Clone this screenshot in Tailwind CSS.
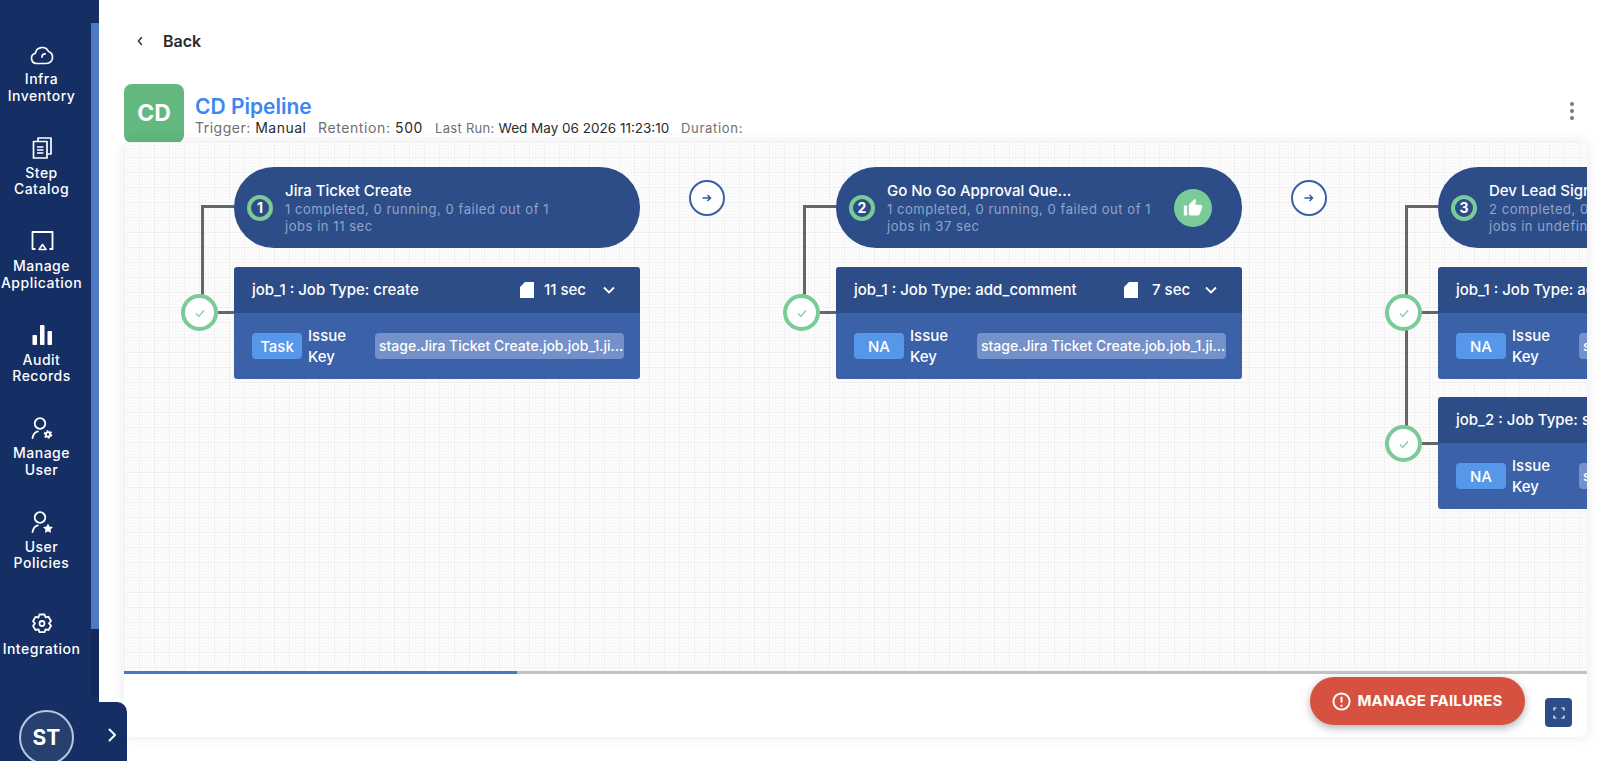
<!DOCTYPE html>
<html lang="en">
  <head>
    <meta charset="UTF-8" />
    <script src="https://cdn.jsdelivr.net/npm/@tailwindcss/browser@4"></script>
    <title>CD Pipeline</title>
  </head>
  <body class="w-[1600px] h-[761px] overflow-hidden bg-white flex font-['Inter',sans-serif] relative">
    <!-- sidebar -->
    <aside class="w-[99px] h-full bg-[#152e63] shrink-0 flex relative">
      <nav class="w-[83px] mr-[8px] pt-[42px] flex flex-col text-white text-[14px] tracking-[0.5px] leading-[16.5px] font-medium text-center whitespace-nowrap">
        <a class="h-[93.5px] flex flex-col items-center">
          <svg class="w-6 h-6 mb-[5px]" viewBox="0 0 24 24" fill="none" stroke="currentColor" stroke-width="1.7" stroke-linecap="round" stroke-linejoin="round"><path d="M6.500 21.500a5.200 5.200 0 0 1-1.200-10.200A7 7 0 0 1 18.500 9.500a6 6 0 0 1 4 5.900 6 6 0 0 1-6 6.100z"/><path d="M12 15a3.200 3.200 0 0 1 3.200-3.200"/></svg>
          <span>Infra<br />Inventory</span>
        </a>
        <a class="h-[93.5px] flex flex-col items-center">
          <svg class="w-6 h-6 mb-[5px]" viewBox="0 0 24 24" fill="none" stroke="currentColor" stroke-width="1.7" stroke-linejoin="round"><path d="M8 5V2h13v16h-3.500"/><path d="M5.500 5.500H17V22H3.500V5.500z"/><path d="M7 11h6.500M7 14h6.500M7 17h6.500"/></svg>
          <span>Step<br />Catalog</span>
        </a>
        <a class="h-[93.5px] flex flex-col items-center">
          <svg class="w-6 h-6 mb-[5px]" viewBox="0 0 24 24" fill="none" stroke="currentColor" stroke-width="1.8" stroke-linejoin="round"><path d="M5.500 20H2.500V3h20v17h-3"/><path d="M12.500 15.500l3.500 5H9z" stroke-width="1.600"/></svg>
          <span>Manage<br />Application</span>
        </a>
        <a class="h-[93.5px] flex flex-col items-center">
          <svg class="w-6 h-6 mb-[5px]" viewBox="0 0 24 24" fill="currentColor"><rect x="2.500" y="12" width="4.500" height="10" rx="0.800"/><rect x="10" y="2" width="4.500" height="20" rx="0.800"/><rect x="17.500" y="8" width="4.500" height="14" rx="0.800"/></svg>
          <span>Audit<br />Records</span>
        </a>
        <a class="h-[93.5px] flex flex-col items-center">
          <svg class="w-6 h-6 mb-[5px]" viewBox="0 0 24 24" fill="none" stroke="currentColor" stroke-width="1.8" stroke-linecap="round"><circle cx="10" cy="7.500" r="5.300"/><path d="M2.500 22c.6-3.500 2.600-5.800 5.300-6.600"/><circle cx="18" cy="18.500" r="2.200" stroke-width="2"/><circle cx="18" cy="18.500" r="3.600" stroke-width="1.500" stroke-linecap="butt" stroke-dasharray="1.900 1.870"/></svg>
          <span>Manage<br />User</span>
        </a>
        <a class="h-[102px] flex flex-col items-center">
          <svg class="w-6 h-6 mb-[5px]" viewBox="0 0 24 24" fill="none" stroke="currentColor" stroke-width="1.8" stroke-linecap="round"><circle cx="10" cy="7.500" r="5.300"/><path d="M2.500 22c.6-3.500 2.600-5.800 5.300-6.600"/><path d="M18 13.500l1.500 3.100 3.500.5-2.500 2.400.6 3.500-3.100-1.700-3.100 1.700.6-3.500-2.500-2.400 3.500-.5z" fill="currentColor" stroke="none"/></svg>
          <span>User<br />Policies</span>
        </a>
        <a class="h-[60px] flex flex-col items-center">
          <svg class="w-6 h-6 mb-[5px]" viewBox="0 0 24 24" fill="none" stroke="currentColor" stroke-width="1.800" stroke-linejoin="round"><path d="M9.500 2.500h5l1 2.800 3-.6 2.500 4.300-2 2.300 2 2.400-2.500 4.300-3-.6-1 2.800h-5l-1-2.800-3 .6L3 13.900l2-2.400-2-2.300 2.500-4.300 3 .6z"/><circle cx="12" cy="11.500" r="2.500"/></svg>
          <span>Integration</span>
        </a>
      </nav>
      <!-- sidebar scrollbar -->
      <div class="w-2 h-[674px] mt-[23px] bg-[#122a5a]">
        <div class="h-[606px] bg-[#5079c4]"></div>
      </div>
    </aside>

    <!-- collapse tab with avatar -->
    <div class="absolute left-0 top-[702px] w-[127px] h-[59px] bg-[#152e63] rounded-tr-[10px] z-10 pl-[19px] pt-[8px] flex">
      <div class="w-[55px] h-[55px] rounded-full border-2 border-[#b9c6dc] bg-[#27406f] text-white text-[21px] font-bold flex items-center justify-center">ST</div>
      <svg class="w-3 h-4 ml-[32px] mt-[17px]" viewBox="0 0 12 16" fill="none" stroke="white" stroke-width="2" stroke-linecap="round" stroke-linejoin="round"><path d="M3.500 2.500L9 8l-5.500 5.500"/></svg>
    </div>

    <main class="flex-1 min-w-0 pl-[25px] pr-[13px] flex flex-col">
      <div class="h-[84px] pt-[31px] flex text-[#2b2b2b]">
        <div class="flex items-center h-5 ml-[12px] gap-[19px]">
          <svg class="w-2 h-2.5" viewBox="0 0 8 10" fill="none" stroke="#333" stroke-width="1.500" stroke-linecap="round" stroke-linejoin="round"><path d="M5.500 1.500L2.500 5l3 3.500"/></svg>
          <span class="text-[16px] font-semibold">Back</span>
        </div>
      </div>

      <header class="h-[58px] flex relative">
        <div class="w-[60px] h-[59px] rounded-lg bg-[#62b87f] text-white text-[23px] font-bold flex items-center justify-center">CD</div>
        <div class="ml-[11px] pt-[10px]">
          <h1 class="text-[21px] leading-[26px] font-semibold text-[#3a86f5]">CD Pipeline</h1>
          <p class="flex items-baseline -mt-[2px] text-[14px] leading-[20px] text-[#6f6f6f]">
            <span class="w-[123px] tracking-[0.5px]">Trigger: <span class="text-[#2b2b2b]">Manual</span></span>
            <span class="w-[117px] tracking-[0.6px]">Retention: <span class="text-[#2b2b2b]">500</span></span>
            <span class="w-[246px] text-[13px] tracking-[0.3px]">Last Run: <span class="text-[13.5px] tracking-normal text-[#2b2b2b]">Wed May 06 2026 11:23:10</span></span>
            <span class="text-[13px] tracking-[0.7px]">Duration:</span>
          </p>
        </div>
        <div class="absolute right-[13px] top-[18px] flex flex-col gap-[3px]">
          <span class="w-1 h-1 rounded-full bg-[#777]"></span>
          <span class="w-1 h-1 rounded-full bg-[#777]"></span>
          <span class="w-1 h-1 rounded-full bg-[#777]"></span>
        </div>
      </header>

      <!-- pipeline card -->
      <section class="w-[1463px] h-[595px] bg-white rounded-lg shadow-[0_0_14px_rgba(0,0,0,0.09)] flex flex-col relative">
        <div class="h-[529px] overflow-hidden rounded-t-lg bg-[#fdfdfd] bg-[linear-gradient(#f1f1f1_1px,transparent_1px),linear-gradient(90deg,#f1f1f1_1px,transparent_1px),linear-gradient(#f8f8f8_1px,transparent_1px),linear-gradient(90deg,#f8f8f8_1px,transparent_1px)] bg-[size:15px_15px,15px_15px,3px_3px,3px_3px] pl-[110px] pt-[25px] flex">

          <!-- stage 1 -->
          <div class="w-[406px] shrink-0 relative">
            <div class="absolute left-[-33px] top-[38px] w-[33px] h-[92px] border-l-[3px] border-t-[3px] border-[#666]"></div>
            <div class="absolute left-[-16px] top-[144px] w-[16px] h-[3px] bg-[#666]"></div>
            <div class="absolute left-[-53px] top-[127px] w-[37px] h-[37px] rounded-full bg-white border-4 border-[#7bcb98] flex items-center justify-center">
              <svg class="w-3 h-3" viewBox="0 0 12 12" fill="none" stroke="#7bcb98" stroke-width="1.200"><path d="M2 6.500l2.800 2.800L10 3.500"/></svg>
            </div>
            <div class="h-[81px] rounded-[40px] bg-[#2d4d88] flex items-center pl-[13px] text-white">
              <div class="w-[26px] h-[26px] rounded-full border-4 border-[#7bcb98] text-[14px] font-bold flex items-center justify-center shrink-0">1</div>
              <div class="ml-[12px]">
                <div class="text-[15px] leading-[20px] font-medium">Jira Ticket Create</div>
                <div class="w-[272px] text-[13px] leading-[17px] text-[#8fa5cc] tracking-[0.55px]">1 completed, 0 running, 0 failed out of 1 jobs in 11 sec</div>
              </div>
            </div>
            <div class="mt-[19px] rounded-[3px] overflow-hidden text-white">
              <div class="h-[46px] bg-[#2d4d88] flex items-center pl-[18px] pr-[24px] text-[15px] font-medium whitespace-nowrap">
                <span class="flex-1">job_1 : Job Type: create</span>
                <svg class="w-[14px] h-[16px]" viewBox="0 0 14 16" fill="white"><path d="M5 0h9v16H0V5z"/></svg>
                <span class="w-[41px] ml-[10px]">11 sec</span>
                <svg class="w-[14px] h-[9px] ml-[17px]" viewBox="0 0 14 9" fill="none" stroke="white" stroke-width="1.800"><path d="M2 1.500l5 5 5-5"/></svg>
              </div>
              <div class="h-[66px] bg-[#3b62a8] flex items-center pl-[18px] pr-[16px] text-[15px] leading-[21px] font-medium">
                <span class="w-[50px] h-[26px] rounded-[4px] bg-[#5797ea] flex items-center justify-center">Task</span>
                <span class="w-[45px] ml-[6px]">Issue Key</span>
                <span class="flex-1 min-w-0 ml-[22px] h-[26px] rounded-[4px] bg-[#7491c9] px-[4px] leading-[26px] whitespace-nowrap text-[14px]">stage.Jira Ticket Create.job.job_1.ji...</span>
              </div>
            </div>
          </div>

          <div class="w-[196px] shrink-0 pl-[49px] pt-[13px]">
            <div class="w-9 h-9 rounded-full border-2 border-[#3a5fa5] bg-white flex items-center justify-center">
              <svg class="w-3 h-3" viewBox="0 0 12 12" fill="none" stroke="#2f5aa5" stroke-width="1.500"><path d="M1.500 6h8M6.500 3l3 3-3 3"/></svg>
            </div>
          </div>

          <!-- stage 2 -->
          <div class="w-[406px] shrink-0 relative">
            <div class="absolute left-[-33px] top-[38px] w-[33px] h-[92px] border-l-[3px] border-t-[3px] border-[#666]"></div>
            <div class="absolute left-[-16px] top-[144px] w-[16px] h-[3px] bg-[#666]"></div>
            <div class="absolute left-[-53px] top-[127px] w-[37px] h-[37px] rounded-full bg-white border-4 border-[#7bcb98] flex items-center justify-center">
              <svg class="w-3 h-3" viewBox="0 0 12 12" fill="none" stroke="#7bcb98" stroke-width="1.200"><path d="M2 6.500l2.800 2.800L10 3.500"/></svg>
            </div>
            <div class="h-[81px] rounded-[40px] bg-[#2d4d88] flex items-center pl-[13px] text-white relative">
              <div class="w-[26px] h-[26px] rounded-full border-4 border-[#7bcb98] text-[14px] font-bold flex items-center justify-center shrink-0">2</div>
              <div class="ml-[12px]">
                <div class="text-[15px] leading-[20px] font-medium">Go No Go Approval Que...</div>
                <div class="w-[272px] text-[13px] leading-[17px] text-[#8fa5cc] tracking-[0.55px]">1 completed, 0 running, 0 failed out of 1 jobs in 37 sec</div>
              </div>
              <div class="absolute right-[30px] top-[22px] w-[38px] h-[38px] rounded-full bg-[#7bcb98] flex items-center justify-center">
                <svg class="w-[20px] h-[20px]" viewBox="0 0 24 24" fill="white"><path d="M1 21h4V9H1v12zm22-11a2 2 0 0 0-2-2h-6.300l1-4.600v-.3c0-.4-.2-.8-.4-1.100L14.200 1 7.600 7.600C7.200 8 7 8.500 7 9v10c0 1.100.9 2 2 2h9c.8 0 1.500-.5 1.800-1.200l3-7.100c.1-.2.200-.5.200-.7v-2z"/></svg>
              </div>
            </div>
            <div class="mt-[19px] rounded-[3px] overflow-hidden text-white">
              <div class="h-[46px] bg-[#2d4d88] flex items-center pl-[18px] pr-[24px] text-[15px] font-medium whitespace-nowrap">
                <span class="flex-1">job_1 : Job Type: add_comment</span>
                <svg class="w-[14px] h-[16px]" viewBox="0 0 14 16" fill="white"><path d="M5 0h9v16H0V5z"/></svg>
                <span class="w-[34px] ml-[14px]">7 sec</span>
                <svg class="w-[14px] h-[9px] ml-[18px]" viewBox="0 0 14 9" fill="none" stroke="white" stroke-width="1.800"><path d="M2 1.500l5 5 5-5"/></svg>
              </div>
              <div class="h-[66px] bg-[#3b62a8] flex items-center pl-[18px] pr-[16px] text-[15px] leading-[21px] font-medium">
                <span class="w-[50px] h-[26px] rounded-[4px] bg-[#5797ea] flex items-center justify-center">NA</span>
                <span class="w-[45px] ml-[6px]">Issue Key</span>
                <span class="flex-1 min-w-0 ml-[22px] h-[26px] rounded-[4px] bg-[#7491c9] px-[4px] leading-[26px] whitespace-nowrap text-[14px]">stage.Jira Ticket Create.job.job_1.ji...</span>
              </div>
            </div>
          </div>

          <div class="w-[196px] shrink-0 pl-[49px] pt-[13px]">
            <div class="w-9 h-9 rounded-full border-2 border-[#3a5fa5] bg-white flex items-center justify-center">
              <svg class="w-3 h-3" viewBox="0 0 12 12" fill="none" stroke="#2f5aa5" stroke-width="1.500"><path d="M1.500 6h8M6.500 3l3 3-3 3"/></svg>
            </div>
          </div>

          <!-- stage 3, runs off the right edge -->
          <div class="w-[406px] shrink-0 relative">
            <div class="absolute left-[-33px] top-[38px] w-[33px] h-[225px] border-l-[3px] border-t-[3px] border-[#666]"></div>
            <div class="absolute left-[-16px] top-[144px] w-[16px] h-[3px] bg-[#666]"></div>
            <div class="absolute left-[-16px] top-[275px] w-[16px] h-[3px] bg-[#666]"></div>
            <div class="absolute left-[-53px] top-[127px] w-[37px] h-[37px] rounded-full bg-white border-4 border-[#7bcb98] flex items-center justify-center">
              <svg class="w-3 h-3" viewBox="0 0 12 12" fill="none" stroke="#7bcb98" stroke-width="1.200"><path d="M2 6.500l2.800 2.800L10 3.500"/></svg>
            </div>
            <div class="absolute left-[-53px] top-[258px] w-[37px] h-[37px] rounded-full bg-white border-4 border-[#7bcb98] flex items-center justify-center">
              <svg class="w-3 h-3" viewBox="0 0 12 12" fill="none" stroke="#7bcb98" stroke-width="1.200"><path d="M2 6.500l2.800 2.800L10 3.500"/></svg>
            </div>
            <div class="h-[81px] rounded-[40px] bg-[#2d4d88] flex items-center pl-[13px] text-white">
              <div class="w-[26px] h-[26px] rounded-full border-4 border-[#7bcb98] text-[14px] font-bold flex items-center justify-center shrink-0">3</div>
              <div class="ml-[12px]">
                <div class="text-[15px] leading-[20px] font-medium">Dev Lead Sign Off</div>
                <div class="w-[272px] text-[13px] leading-[17px] text-[#8fa5cc] tracking-[0.55px]">2 completed, 0 running, 0 failed out of 2 jobs in undefined</div>
              </div>
            </div>
            <div class="mt-[19px] rounded-[3px] overflow-hidden text-white">
              <div class="h-[46px] bg-[#2d4d88] flex items-center pl-[18px] text-[15px] font-medium">job_1 : Job Type: add_comment</div>
              <div class="h-[66px] bg-[#3b62a8] flex items-center pl-[18px] pr-[16px] text-[15px] leading-[21px] font-medium">
                <span class="w-[50px] h-[26px] rounded-[4px] bg-[#5797ea] flex items-center justify-center">NA</span>
                <span class="w-[45px] ml-[6px]">Issue Key</span>
                <span class="flex-1 min-w-0 ml-[22px] h-[26px] rounded-[4px] bg-[#7491c9] px-[4px] leading-[26px] whitespace-nowrap text-[14px]">stage.Jira Ticket Create.job.job_1.ji...</span>
              </div>
            </div>
            <div class="mt-[18px] rounded-[3px] overflow-hidden text-white">
              <div class="h-[46px] bg-[#2d4d88] flex items-center pl-[18px] text-[15px] font-medium">job_2 : Job Type: set_status</div>
              <div class="h-[66px] bg-[#3b62a8] flex items-center pl-[18px] pr-[16px] text-[15px] leading-[21px] font-medium">
                <span class="w-[50px] h-[26px] rounded-[4px] bg-[#5797ea] flex items-center justify-center">NA</span>
                <span class="w-[45px] ml-[6px]">Issue Key</span>
                <span class="flex-1 min-w-0 ml-[22px] h-[26px] rounded-[4px] bg-[#7491c9] px-[4px] leading-[26px] whitespace-nowrap text-[14px]">stage.Jira Ticket Create.job.job_1.ji...</span>
              </div>
            </div>
          </div>
        </div>

        <!-- horizontal scrollbar -->
        <div class="h-[3px] bg-[#c4c4c4]">
          <div class="w-[393px] h-full bg-[#4a76c6]"></div>
        </div>

        <!-- footer actions -->
        <div class="flex-1 relative">
          <button class="absolute left-[1186px] top-[3px] w-[215px] h-[48px] rounded-[24px] bg-[#d75140] shadow-[0_3px_8px_rgba(0,0,0,0.3)] text-white text-[15px] tracking-[0.2px] font-bold flex items-center justify-center gap-[6px] whitespace-nowrap">
            <svg class="w-[19px] h-[19px]" viewBox="0 0 20 20" fill="none" stroke="white" stroke-width="2"><circle cx="10" cy="10" r="8.500"/><path d="M10 5v6M10 13.500v2"/></svg>
            MANAGE FAILURES
          </button>
          <button class="absolute left-[1421px] top-[24px] w-[27px] h-[29px] rounded-[4px] bg-[#2d4d88] flex items-center justify-center">
            <svg class="w-[12px] h-[12px]" viewBox="0 0 12 12" fill="none" stroke="white" stroke-width="1.200"><path d="M1 3.500V1h2.500M8.500 1H11v2.500M11 8.500V11H8.500M3.500 11H1V8.500"/></svg>
          </button>
        </div>
      </section>
    </main>
  </body>
</html>
